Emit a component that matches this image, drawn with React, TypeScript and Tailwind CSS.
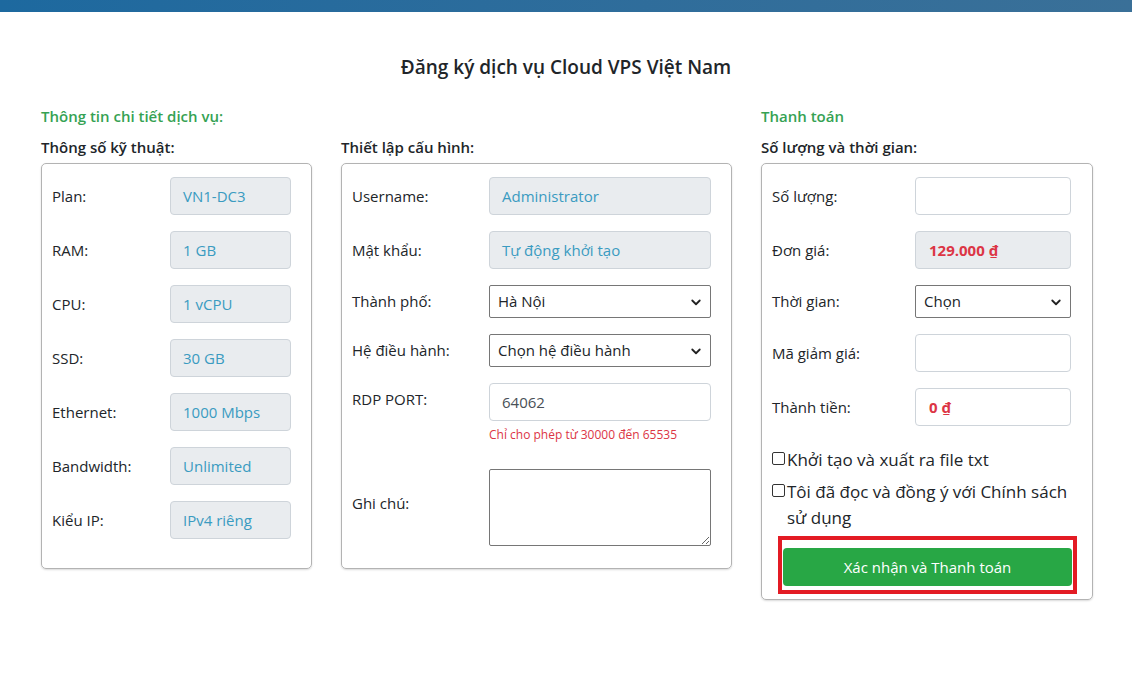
import React from "react";

interface FieldRow {
  label: string;
  value: string;
}

const specs: FieldRow[] = [
  { label: "Plan:", value: "VN1-DC3" },
  { label: "RAM:", value: "1 GB" },
  { label: "CPU:", value: "1 vCPU" },
  { label: "SSD:", value: "30 GB" },
  { label: "Ethernet:", value: "1000 Mbps" },
  { label: "Bandwidth:", value: "Unlimited" },
  { label: "Kiểu IP:", value: "IPv4 riêng" },
];

function Chevron() {
  return (
    <svg
      viewBox="0 0 16 16"
      className="pointer-events-none absolute right-[9px] top-1/2 h-[12px] w-[12px] -translate-y-1/2"
    >
      <path d="M3 6l5 5 5-5" fill="none" stroke="#222" strokeWidth="2.4" strokeLinecap="round" strokeLinejoin="round" />
    </svg>
  );
}

function SelectBox({ value, width }: { value: string; width: string }) {
  return (
    <div className={`relative ${width}`}>
      <select
        defaultValue={value}
        className="h-[33px] w-full appearance-none rounded-[2px] border border-[#767676] bg-white pl-[8px] text-[15px] text-[#212529] outline-none"
      >
        <option>{value}</option>
      </select>
      <Chevron />
    </div>
  );
}

function Readonly({ value, width }: { value: string; width: string }) {
  return (
    <div
      className={`flex h-[38px] ${width} items-center rounded-[4px] border border-[#ced4da] bg-[#e9ecef] pl-[12px] text-[15px] text-[#3a9bc1]`}
    >
      {value}
    </div>
  );
}

export default function App() {
  return (
    <div className="min-h-screen bg-white font-['Open_Sans',sans-serif] text-[#212529]">
      {/* top bar */}
      <div className="h-3 bg-gradient-to-r from-[#1d699f] to-[#3a7098]" />

      <h1 className="mt-[41px] text-center text-[19px] leading-[28px] font-semibold">
        Đăng ký dịch vụ Cloud VPS Việt Nam
      </h1>

      <div className="mt-[23px] ml-[41px] flex items-start gap-[29px]">
        {/* Cột 1 */}
        <div className="w-[271px]">
          <div className="text-[15px] leading-6 font-semibold text-[#35a253]">
            Thông tin chi tiết dịch vụ:
          </div>
          <div className="mt-[7px] text-[15px] leading-6 font-semibold">Thông số kỹ thuật:</div>
          <div className="mt-[4px] h-[406px] rounded-[5px] border border-[#b3b3b3] pt-[13px] pl-[10px] shadow-[0_1px_2px_rgba(0,0,0,0.15)]">
            {specs.map((s) => (
              <div key={s.label} className="mb-4 flex items-center">
                <div className="w-[118px] text-[15px]">{s.label}</div>
                <Readonly value={s.value} width="w-[121px]" />
              </div>
            ))}
          </div>
        </div>

        {/* Cột 2 */}
        <div className="w-[391px]">
          <div className="h-6" />
          <div className="mt-[7px] text-[15px] leading-6 font-semibold">Thiết lập cấu hình:</div>
          <div className="mt-[4px] h-[406px] rounded-[5px] border border-[#b3b3b3] pt-[13px] pl-[10px] shadow-[0_1px_2px_rgba(0,0,0,0.15)]">
            <div className="mb-4 flex items-center">
              <div className="w-[137px] text-[15px]">Username:</div>
              <Readonly value="Administrator" width="w-[222px]" />
            </div>
            <div className="mb-4 flex items-center">
              <div className="w-[137px] text-[15px]">Mật khẩu:</div>
              <Readonly value="Tự động khởi tạo" width="w-[222px]" />
            </div>
            <div className="mb-4 flex items-center">
              <div className="w-[137px] text-[15px]">Thành phố:</div>
              <SelectBox value="Hà Nội" width="w-[222px]" />
            </div>
            <div className="mb-4 flex items-center">
              <div className="w-[137px] text-[15px]">Hệ điều hành:</div>
              <SelectBox value="Chọn hệ điều hành" width="w-[222px]" />
            </div>
            <div className="flex items-start">
              <div className="w-[137px] pt-[5px] text-[15px]">RDP PORT:</div>
              <div className="w-[222px]">
                <input
                  defaultValue="64062"
                  className="h-[38px] w-full rounded-[4px] border border-[#ced4da] bg-white pl-[12px] text-[15px] text-[#495057] outline-none"
                />
                <div className="mt-[6px] text-[12px] leading-4 text-[#dc3545]">
                  Chỉ cho phép từ 30000 đến 65535
                </div>
              </div>
            </div>
            <div className="mt-[26px] flex items-center">
              <div className="w-[137px] pb-[8px] text-[15px]">Ghi chú:</div>
              <textarea className="block h-[77px] w-[222px] rounded-[2px] border border-[#767676] outline-none" />
            </div>
          </div>
        </div>

        {/* Cột 3 */}
        <div className="w-[332px]">
          <div className="text-[15px] leading-6 font-semibold text-[#35a253]">Thanh toán</div>
          <div className="mt-[7px] text-[15px] leading-6 font-semibold">Số lượng và thời gian:</div>
          <div className="mt-[4px] rounded-[5px] border border-[#b3b3b3] pt-[13px] pr-[15px] pb-[5px] pl-[10px] shadow-[0_1px_2px_rgba(0,0,0,0.15)]">
            <div className="mb-4 flex items-center">
              <div className="w-[143px] text-[15px]">Số lượng:</div>
              <input className="h-[38px] w-[156px] rounded-[4px] border border-[#ced4da] bg-white outline-none" />
            </div>
            <div className="mb-4 flex items-center">
              <div className="w-[143px] text-[15px]">Đơn giá:</div>
              <div className="flex h-[38px] w-[156px] items-center rounded-[4px] border border-[#ced4da] bg-[#e9ecef] pl-[13px] text-[15px] font-bold text-[#dc3545]">
                129.000 ₫
              </div>
            </div>
            <div className="mb-4 flex items-center">
              <div className="w-[143px] text-[15px]">Thời gian:</div>
              <SelectBox value="Chọn" width="w-[156px]" />
            </div>
            <div className="mb-4 flex items-center">
              <div className="w-[143px] text-[15px]">Mã giảm giá:</div>
              <input className="h-[38px] w-[156px] rounded-[4px] border border-[#ced4da] bg-white outline-none" />
            </div>
            <div className="flex items-center">
              <div className="w-[143px] text-[15px]">Thành tiền:</div>
              <div className="flex h-[38px] w-[156px] items-center rounded-[4px] border border-[#ced4da] bg-white pl-[13px] text-[15px] font-bold text-[#dc3545]">
                0 ₫
              </div>
            </div>

            <label className="mt-[21px] flex items-start text-[17px] leading-[26px]">
              <input
                type="checkbox"
                className="mt-[5px] mr-[2px] h-[13px] w-[13px] shrink-0 appearance-none rounded-[2px] border border-[#333]"
              />
              Khởi tạo và xuất ra file txt
            </label>
            <label className="mt-[6px] flex items-start text-[17px] leading-[26px]">
              <input
                type="checkbox"
                className="mt-[5px] mr-[2px] h-[13px] w-[13px] shrink-0 appearance-none rounded-[2px] border border-[#333]"
              />
              <span>Tôi đã đọc và đồng ý với Chính sách sử dụng</span>
            </label>

            <div className="mt-[5px] ml-[6px] border-4 border-[#e31b24] px-[1px] pt-[8px] pb-[4px]">
              <button className="h-[38px] w-full rounded-[4px] bg-[#28a745] text-[15px] text-white">
                Xác nhận và Thanh toán
              </button>
            </div>
          </div>
        </div>
      </div>
    </div>
  );
}
